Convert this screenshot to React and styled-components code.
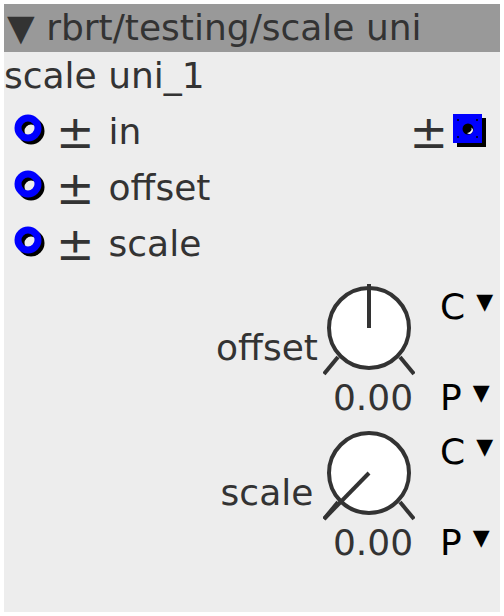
import React from "react"
import styled, { createGlobalStyle } from "styled-components"

const GlobalStyle = createGlobalStyle`
  html, body {
    margin: 0;
    padding: 0;
    background: #ffffff;
  }
  body {
    font-family: "DejaVu Sans", "Liberation Sans", sans-serif;
  }
`

// Outer node panel
const Panel = styled.div`
  margin: 4px;
  width: 496px;
  height: 608px;
  background: #ededed;
  color: #333333;
  font-size: 36px;
  display: flex;
  flex-direction: column;
  overflow: hidden;
`

const Header = styled.div`
  height: 48px;
  line-height: 48px;
  background: #999999;
  padding-left: 3px;
  white-space: nowrap;
`

const Title = styled.div`
  height: 48px;
  line-height: 48px;
  padding-left: 0;
  margin-bottom: 4px;
`

const PortList = styled.div`
  display: flex;
  flex-direction: column;
`

const PortRow = styled.div`
  height: 56px;
  line-height: 56px;
  display: flex;
  align-items: center;
  padding-left: 10px;
`

const Toggle = styled.span`
  font-size: 46px;
  line-height: 56px;
  margin-left: ${(p) => p.$left || 0}px;
  margin-right: ${(p) => p.$right || 0}px;
`

const PortName = styled.span`
  margin-left: 14px;
`

const Outlet = styled.div`
  margin-left: auto;
  display: flex;
  align-items: center;
  padding-right: 12px;
`

const Controls = styled.div`
  margin-top: 12px;
  display: flex;
  flex-direction: column;
  gap: 13px;
`

const KnobRow = styled.div`
  display: flex;
  justify-content: flex-end;
  line-height: 36px;
`

const KnobLabel = styled.div`
  width: 112px;
  text-align: center;
  padding-top: 46px;
`

const KnobCol = styled.div`
  width: 92px;
  display: flex;
  flex-direction: column;
  align-items: center;
  gap: 4px;
`

const Value = styled.div`
  text-align: center;
  margin-left: 8px;
  white-space: nowrap;
`

const SideCol = styled.div`
  width: 60px;
  margin-left: 25px;
  display: flex;
  flex-direction: column;
  justify-content: space-between;
  color: #000000;
  white-space: nowrap;
`

const Arrow = styled.span`
  font-size: 22px;
  vertical-align: 10px;
  margin-left: 11px;
`

const InletIcon = () => (
  <svg width="36" height="36" viewBox="0 0 36 36">
    <circle cx="17" cy="17" r="10" fill="none" stroke="#000" strokeWidth="7" />
    <circle cx="14" cy="14" r="10" fill="none" stroke="#0000ff" strokeWidth="7" />
  </svg>
)

const OutletIcon = () => (
  <svg width="36" height="36" viewBox="0 0 36 36">
    <rect x="5" y="4" width="29" height="29" fill="#000" />
    <rect x="1" y="0" width="29" height="29" fill="#0000ff" />
    <circle cx="6" cy="6" r="1" fill="#000" />
    <circle cx="25" cy="6" r="1" fill="#000" />
    <circle cx="6" cy="23" r="1" fill="#000" />
    <circle cx="25" cy="23" r="1" fill="#000" />
    <circle cx="16" cy="15" r="5.5" fill="#000" />
    <path d="M19.5 13.5 A3.5 3.5 0 0 1 15 19 A4.5 4.5 0 0 0 19.5 13.5 Z" fill="#fff" />
  </svg>
)

const Knob = ({ x, y }) => (
  <svg width="92" height="92" viewBox="0 0 92 92">
    <circle cx="46" cy="44" r="40" fill="#fff" stroke="#333" strokeWidth="4" />
    <line x1="15" y1="73" x2="1" y2="90" stroke="#333" strokeWidth="4" />
    <line x1="77" y1="73" x2="91" y2="90" stroke="#333" strokeWidth="4" />
    <line x1="46" y1="44" x2={x} y2={y} stroke="#333" strokeWidth="4" />
  </svg>
)

const ports = ["in", "offset", "scale"]

const knobs = [
  { name: "offset", value: "0.00", x: 46, y: 0 },
  { name: "scale", value: "0.00", x: 1, y: 90 },
]

const App = () => {
  return (
    <>
      <GlobalStyle />
      <Panel>
        <Header>▼ rbrt/testing/scale uni</Header>
        <Title>scale uni_1</Title>
        <PortList>
          {ports.map((p, i) => (
            <PortRow key={p}>
              <InletIcon />
              <Toggle $left={6}>±</Toggle>
              <PortName>{p}</PortName>
              {i === 0 && (
                <Outlet>
                  <Toggle $right={4}>±</Toggle>
                  <OutletIcon />
                </Outlet>
              )}
            </PortRow>
          ))}
        </PortList>
        <Controls>
          {knobs.map((k) => (
            <KnobRow key={k.name}>
              <KnobLabel>{k.name}</KnobLabel>
              <KnobCol>
                <Knob x={k.x} y={k.y} />
                <Value>{k.value}</Value>
              </KnobCol>
              <SideCol>
                <div>
                  C<Arrow>▼</Arrow>
                </div>
                <div>
                  P<Arrow>▼</Arrow>
                </div>
              </SideCol>
            </KnobRow>
          ))}
        </Controls>
      </Panel>
    </>
  )
}

export default App
